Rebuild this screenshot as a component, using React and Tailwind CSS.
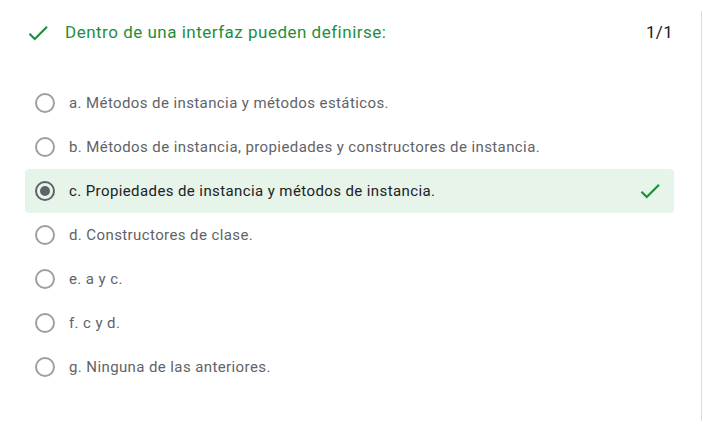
const options = [
	"a. Métodos de instancia y métodos estáticos.",
	"b. Métodos de instancia, propiedades y constructores de instancia.",
	"c. Propiedades de instancia y métodos de instancia.",
	"d. Constructores de clase.",
	"e. a y c.",
	"f. c y d.",
	"g. Ninguna de las anteriores.",
];

function Check({ className }) {
	return (
		<svg viewBox="0 0 24 24" className={className} fill="currentColor">
			<path d="M9 16.17L4.83 12l-1.42 1.41L9 19 21 7l-1.41-1.41z" />
		</svg>
	);
}

function Radio({ checked }) {
	return (
		<svg viewBox="0 0 20 20" className="w-5 h-5 shrink-0">
			<circle
				cx="10"
				cy="10"
				r="9"
				fill="none"
				stroke={checked ? "#5f6368" : "#9aa0a6"}
				strokeWidth="2"
			/>
			{checked && <circle cx="10" cy="10" r="5" fill="#5f6368" />}
		</svg>
	);
}

export default function App() {
	return (
		<div
			className="w-[702px] h-[421px] bg-white border-r border-[#dadce0] pl-[25px] pr-[27px]"
			style={{ fontFamily: "Roboto, 'Liberation Sans', sans-serif" }}
		>
			{/* header */}
			<div className="flex items-center h-[44px] mt-[11px]">
				<Check className="w-[26px] h-[26px] text-[#1e8e3e] shrink-0" />
				<span className="ml-[14px] text-[17px] tracking-[0.5px] text-[#1e8e3e]">
					Dentro de una interfaz pueden definirse:
				</span>
				<span className="ml-auto text-[17px] tracking-[0.3px] text-[#202124] pr-[1px]">1/1</span>
			</div>

			{/* options */}
			<div className="mt-[26px] flex flex-col">
				{options.map((opt, i) => {
					const sel = i === 2;
					return (
						<div
							key={opt}
							className={
								"flex items-center h-[44px] pl-[10px] pr-[11px] rounded " +
								(sel ? "bg-[#e6f4ea]" : "")
							}
						>
							<Radio checked={sel} />
							<span
								className={
									"ml-[14px] text-[15px] tracking-[0.4px] " +
									(sel ? "text-[#202124]" : "text-[#5f6368]")
								}
							>
								{opt}
							</span>
							{sel && <Check className="ml-auto w-[26px] h-[26px] text-[#1e8e3e]" />}
						</div>
					);
				})}
			</div>
		</div>
	);
}
